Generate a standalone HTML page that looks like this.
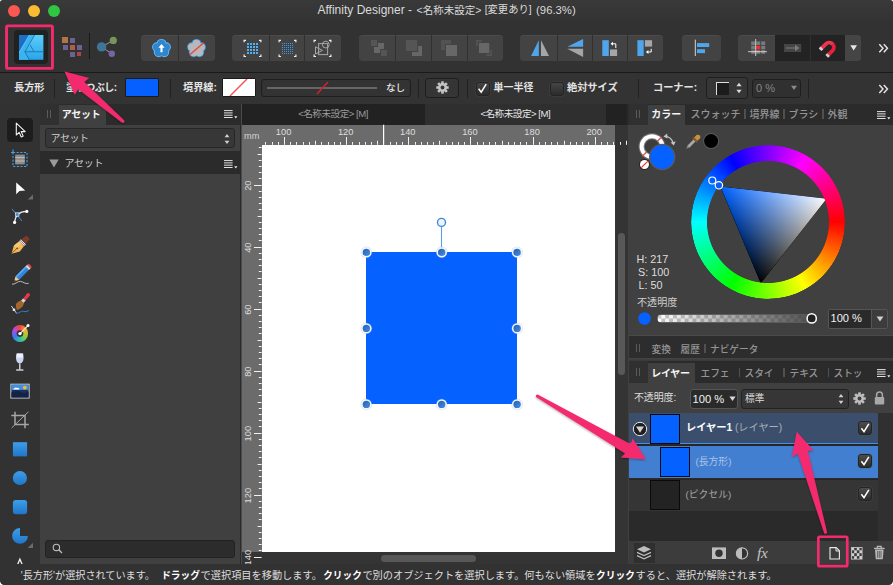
<!DOCTYPE html>
<html lang="ja"><head><meta charset="utf-8">
<title>Affinity Designer</title>
<style>
*{box-sizing:border-box;margin:0;padding:0}
html,body{width:893px;height:585px;overflow:hidden;background:#323232}
body{font-family:"Liberation Sans","Noto Sans CJK JP",sans-serif;font-size:12px;color:#dcdcdc;position:relative}
.a{position:absolute}
.t{position:absolute;white-space:nowrap;line-height:1}
.grp{position:absolute;top:35px;height:26px;background:#434343;box-shadow:inset 0 1px 0 #4b4b4b;border-radius:4px;overflow:hidden}
.grp i{position:absolute;top:0;bottom:0;width:1px;background:#303030}
.vs{position:absolute;top:78.5px;height:19.5px;width:1px;background:#212121;margin-left:-.5px}
.box{position:absolute;background:#363636;border:1px solid #1e1e1e;border-radius:3px}
.cb{position:absolute;width:14px;height:14px;border-radius:3px;background:linear-gradient(#454545,#2c2c2c);border:1px solid #242424;box-shadow:0 0 0 .5px rgba(90,90,90,.45)}
svg{position:absolute;overflow:visible}
.tg{font-size:10px;font-weight:500;color:#949494}
.ts{width:1.3px;height:9.4px;background:#505050;margin-left:-.6px}
.lc{background:linear-gradient(#4c4c4c,#2c2c2c);border-color:#242424;box-shadow:0 0 0 .5px rgba(90,90,90,.5)}
</style></head><body>

<!-- ===== title bar ===== -->
<div class="a" id="titlebar" style="left:0;top:0;width:893px;height:21px;background:linear-gradient(#393939,#333)"></div>
<div class="a" style="left:8px;top:5px;width:12px;height:12px;border-radius:50%;background:#fc5753"></div>
<div class="a" style="left:28px;top:5px;width:12px;height:12px;border-radius:50%;background:#fcbc31"></div>
<div class="a" style="left:48px;top:5px;width:12px;height:12px;border-radius:50%;background:#30c642"></div>
<div class="t" style="left:317.5px;top:4px;font-size:12px;color:#dadada">Affinity Designer -</div><div class="t" style="left:416.6px;top:5px;font-size:10.5px;color:#dadada">&lt;名称未設定&gt;</div><div class="t" style="left:484.7px;top:5px;font-size:10.3px;color:#dadada">[変更あり]</div><div class="t" style="left:536.1px;top:4.5px;font-size:11.3px;color:#dadada">(96.3%)</div>

<!-- ===== toolbar ===== -->
<div class="a" id="toolbar" style="left:0;top:21px;width:893px;height:51px;background:#323232"></div>
<!-- persona button -->
<div class="a" style="left:14px;top:30px;width:34px;height:34px;border-radius:4px;background:#212121"></div>
<svg style="left:19px;top:34.5px" width="24.4" height="24.8" viewBox="0 0 24 24" preserveAspectRatio="none">
 <defs><linearGradient id="afg" x1="0" y1="0" x2="0" y2="1"><stop offset="0" stop-color="#5ccdf9"/><stop offset="1" stop-color="#28a5ea"/></linearGradient></defs>
 <rect width="24" height="24" fill="url(#afg)"/>
 <path d="M0 0H10.2L0 17Z" fill="#1c6fc4"/>
 <path d="M10.2 0H15.4L5.6 16.2 10 24H5.4L0 24V17Z" fill="#39b4f0"/>
 <path d="M15.4 0L5.8 16.2 10.2 24M5.8 16.2H24M11 9.5L14.4 15.6M8 15.6" fill="none" stroke="#14629f" stroke-width=".7"/>
 <path d="M0 17L10.2 0" stroke="#7fdcff" stroke-width=".5" fill="none"/>
</svg>
<!-- pixel persona -->
<div class="a" style="left:62px;top:37px;width:6px;height:6px;background:#b47446"></div>
<div class="a" style="left:70px;top:38px;width:5px;height:5px;background:#6a6293"></div>
<div class="a" style="left:63px;top:45px;width:5px;height:5px;background:#6a6293"></div>
<div class="a" style="left:70px;top:45px;width:5px;height:5px;background:#b25f40"></div>
<div class="a" style="left:77px;top:45px;width:5px;height:5px;background:#6a6293"></div>
<div class="a" style="left:70px;top:52px;width:5px;height:5px;background:#6a6293"></div>
<div class="a" style="left:77px;top:52px;width:4px;height:4px;background:#ad4548"></div>
<div class="a" style="left:89px;top:33px;width:1px;height:26px;background:#191919"></div>
<!-- share -->
<svg style="left:95px;top:35px" width="24" height="24" viewBox="95 35 24 24">
 <path d="M113.3 40.4L101.6 46.9 111.8 53.8" fill="none" stroke="#9a9a9a" stroke-width="1"/>
 <circle cx="101.6" cy="46.9" r="4.7" fill="#3f7697"/><circle cx="113.3" cy="40.4" r="3.6" fill="#76955a"/><circle cx="111.8" cy="53.8" r="3.2" fill="#7764a2"/>
</svg>
<!-- group 1 -->
<div class="grp" style="left:141px;width:74px"><i style="left:37px"></i></div>
<svg style="left:149.6px;top:37.4px" width="23" height="23" viewBox="-11 -11 22 22">
 <g fill="#6cbaf6"><circle cx="0" cy="-4.6" r="4.6"/><circle cx="4.4" cy="-1.4" r="4.6"/><circle cx="2.7" cy="3.7" r="4.6"/><circle cx="-2.7" cy="3.7" r="4.6"/><circle cx="-4.4" cy="-1.4" r="4.6"/></g>
 <g fill="#2d86cf"><circle cx="0" cy="0" r="4"/><circle cx="0" cy="-4.6" r="3.7"/><circle cx="4.4" cy="-1.4" r="3.7"/><circle cx="2.7" cy="3.7" r="3.7"/><circle cx="-2.7" cy="3.7" r="3.7"/><circle cx="-4.4" cy="-1.4" r="3.7"/></g>
 <path d="M0 -4.2L3 -.6H1V3.6H-1V-.6H-3Z" fill="#fff"/>
</svg>
<svg style="left:184.8px;top:37.4px" width="23" height="23" viewBox="-11 -11 22 22">
 <g fill="#3c9aea"><circle cx="0" cy="-4.6" r="4.6"/><circle cx="4.4" cy="-1.4" r="4.6"/><circle cx="2.7" cy="3.7" r="4.6"/><circle cx="-2.7" cy="3.7" r="4.6"/><circle cx="-4.4" cy="-1.4" r="4.6"/></g>
 <g fill="#b8b8b8"><circle cx="0" cy="0" r="4"/><circle cx="0" cy="-4.6" r="3.7"/><circle cx="4.4" cy="-1.4" r="3.7"/><circle cx="2.7" cy="3.7" r="3.7"/><circle cx="-2.7" cy="3.7" r="3.7"/><circle cx="-4.4" cy="-1.4" r="3.7"/></g>
 <path d="M-6.5 6L7 -5.5" stroke="#f03a3a" stroke-width="1.1"/>
</svg>
<!-- group 2 -->
<div class="grp" style="left:232px;width:109px"><i style="left:37px"></i><i style="left:72px"></i></div>
<!-- group 3 -->
<div class="grp" style="left:359px;width:144px"><i style="left:36px"></i><i style="left:72px"></i><i style="left:108px"></i></div>
<!-- group 4 -->
<div class="grp" style="left:520px;width:143px"><i style="left:37px"></i><i style="left:72px"></i><i style="left:107px"></i></div>
<!-- group 5 -->
<div class="grp" style="left:682px;width:39px"></div>
<!-- group 6 -->
<div class="grp" style="left:738px;width:123px"><div class="a" style="left:37px;top:0;width:70px;height:26px;background:#232323"></div><i style="left:72px;background:#2f2f2f"></i><div class="a" style="left:107px;top:0;width:16px;height:26px;background:#454545"></div></div>
<!-- toolbar icons overlay -->
<svg style="left:0;top:0" width="893" height="72" viewBox="0 0 893 72">
 <!-- g2 icon1 -->
 <g fill="none" stroke="#f0f0f0" stroke-width="1.2">
  <path d="M244.1 42.2V40.3H246M259 40.3H260.9V42.2M260.9 54.6V56.5H259M246 56.5H244.1V54.6"/>
  <path d="M279.1 42.2V40.3H281M294 40.3H295.9V42.2M295.9 54.6V56.5H294M281 56.5H279.1V54.6"/>
  <path d="M314.1 42.2V40.3H316M329 40.3H330.9V42.2M330.9 54.6V56.5H329M316 56.5H314.1V54.6"/>
 </g>
 <g fill="#4fb0f5"><rect x="247" y="43" width="2" height="2"/><rect x="250" y="43" width="2" height="2"/><rect x="253" y="43" width="2" height="2"/><rect x="256" y="43" width="2" height="2"/><rect x="247" y="46" width="2" height="2"/><rect x="250" y="46" width="2" height="2"/><rect x="253" y="46" width="2" height="2"/><rect x="256" y="46" width="2" height="2"/><rect x="247" y="49" width="2" height="2"/><rect x="250" y="49" width="2" height="2"/><rect x="253" y="49" width="2" height="2"/><rect x="256" y="49" width="2" height="2"/><rect x="247" y="52" width="2" height="2"/><rect x="250" y="52" width="2" height="2"/><rect x="253" y="52" width="2" height="2"/><rect x="256" y="52" width="2" height="2"/></g>
 <g fill="#3f97e0"><rect x="282" y="43" width="1" height="1"/><rect x="284" y="43" width="1" height="1"/><rect x="286" y="43" width="1" height="1"/><rect x="288" y="43" width="1" height="1"/><rect x="290" y="43" width="1" height="1"/><rect x="292" y="43" width="1" height="1"/><rect x="282" y="45" width="1" height="1"/><rect x="284" y="45" width="1" height="1"/><rect x="286" y="45" width="1" height="1"/><rect x="288" y="45" width="1" height="1"/><rect x="290" y="45" width="1" height="1"/><rect x="292" y="45" width="1" height="1"/><rect x="282" y="47" width="1" height="1"/><rect x="284" y="47" width="1" height="1"/><rect x="286" y="47" width="1" height="1"/><rect x="288" y="47" width="1" height="1"/><rect x="290" y="47" width="1" height="1"/><rect x="292" y="47" width="1" height="1"/><rect x="282" y="49" width="1" height="1"/><rect x="284" y="49" width="1" height="1"/><rect x="286" y="49" width="1" height="1"/><rect x="288" y="49" width="1" height="1"/><rect x="290" y="49" width="1" height="1"/><rect x="292" y="49" width="1" height="1"/><rect x="282" y="51" width="1" height="1"/><rect x="284" y="51" width="1" height="1"/><rect x="286" y="51" width="1" height="1"/><rect x="288" y="51" width="1" height="1"/><rect x="290" y="51" width="1" height="1"/><rect x="292" y="51" width="1" height="1"/><rect x="282" y="53" width="1" height="1"/><rect x="284" y="53" width="1" height="1"/><rect x="286" y="53" width="1" height="1"/><rect x="288" y="53" width="1" height="1"/><rect x="290" y="53" width="1" height="1"/><rect x="292" y="53" width="1" height="1"/></g>
 <!-- g2 icon3 -->
 <g fill="none" stroke="#a8a8a8" stroke-width="1">
  <rect x="318.6" y="43.6" width="9" height="11"/><circle cx="325.8" cy="44.6" r="3.4"/><path d="M315.5 46.8L322.4 50.4 315.5 54Z"/>
 </g>
 <!-- g3 icons (disabled) -->
 <rect x="371" y="40" width="6" height="6" fill="#555"/><rect x="381" y="50" width="6" height="6" fill="#555"/><rect x="378" y="43" width="6" height="6" fill="#676767"/><rect x="374" y="47" width="6" height="6" fill="#676767"/>
 <rect x="412" y="46" width="10" height="10" fill="#676767"/><rect x="405" y="39" width="13.2" height="13" fill="#434343"/><rect x="406" y="40" width="11.2" height="11" fill="#555"/>
 <rect x="441" y="40" width="10" height="10" fill="#525252"/><rect x="445" y="44" width="13" height="13" fill="#434343"/><rect x="446" y="45" width="11" height="11" fill="#676767"/>
 <rect x="476" y="40" width="6" height="6" fill="#525252"/><rect x="486" y="50" width="6" height="6" fill="#525252"/><rect x="478" y="42" width="12.3" height="12" fill="#434343"/><rect x="479" y="43" width="10.3" height="10" fill="#676767"/>
 <!-- g4 icons -->
 <path d="M531.1 56L538.8 40.2V56Z" fill="#4fa6ec"/><path d="M541 40.2L549 56H541Z" fill="#a6a6a6"/>
 <path d="M567.3 46.7L583.1 39V46.7Z" fill="#4fa6ec"/><path d="M567.3 48.8H583.1V56.9Z" fill="#a6a6a6"/>
 <rect x="602.3" y="40.2" width="6.5" height="15.8" fill="#4fa6ec"/><rect x="610" y="49.4" width="7.1" height="6.6" fill="#a6a6a6"/>
 <path d="M615.8 48V43.8H612" fill="none" stroke="#fff" stroke-width="1"/><path d="M610.6 43.8L613 41.8V45.8Z" fill="#fff"/>
 <rect x="637.4" y="40.2" width="6.3" height="15.8" fill="#4fa6ec"/><rect x="644.9" y="40.2" width="7.2" height="6.4" fill="#a6a6a6"/>
 <path d="M651.2 48.8V52H647.6" fill="none" stroke="#fff" stroke-width="1"/><path d="M645.8 52L648.4 50V54Z" fill="#fff"/>
 <!-- g5 -->
 <path d="M695.3 39.7V56" stroke="#d8d8d8" stroke-width="1"/><rect x="697" y="43.1" width="12.2" height="3.9" fill="#4fa6ec"/><rect x="697" y="49.2" width="8" height="3.9" fill="#4fa6ec"/>
 <!-- g6 grid -->
 <g fill="#7a7a7a"><rect x="751.2" y="41.4" width="4" height="3.6"/><rect x="756.2" y="41.4" width="4" height="3.6"/><rect x="761.2" y="41.4" width="4" height="3.6"/>
 <rect x="751.2" y="45.8" width="4" height="3.6"/><rect x="761.2" y="45.8" width="4" height="3.6"/>
 <rect x="751.2" y="50.2" width="4" height="3.6"/><rect x="756.2" y="50.2" width="4" height="3.6"/><rect x="761.2" y="50.2" width="4" height="3.6"/></g>
 <rect x="756.2" y="45.8" width="4" height="3.6" fill="#f03030"/>
 <path d="M755.7 39V56M748 51.7H767" stroke="#e8e8e8" stroke-width=".8" fill="none"/>
 <!-- arrow icon -->
 <rect x="784" y="44" width="17.2" height="8" fill="#454545"/><path d="M786 48H797" stroke="#7c7c7c" stroke-width="1"/><path d="M795 44.8L799.4 48 795 51.2Z" fill="#7c7c7c"/>
 <!-- magnet -->
 <g transform="translate(828.5 48) rotate(45)">
  <path d="M-6.6 6.5V-1A6.6 6.6 0 0 1 6.6 -1V6.5H2.8V-1A2.8 2.8 0 0 0 -2.8 -1V6.5Z" fill="#e8203c"/>
  <path d="M-6.6 6.5V-1A6.6 6.6 0 0 1 0 -7.6V-3.8A2.8 2.8 0 0 0 -2.8 -1V6.5Z" fill="#f2455c" opacity=".6"/>
  <rect x="-6.6" y="4.6" width="3.8" height="2.6" fill="#d0d0d0"/><rect x="2.8" y="4.6" width="3.8" height="2.6" fill="#d0d0d0"/>
 </g>
 <path d="M850.3 45.2H857L853.65 50.6Z" fill="#e6e6e6"/>
 <path d="M879.3 44.2L883 48.2 879.3 52.2M883.8 44.2L887.5 48.2 883.8 52.2" fill="none" stroke="#e8e8e8" stroke-width="1.4"/>
</svg>
<div class="a" style="left:0;top:72px;width:893px;height:1px;background:#1a1a1a"></div>

<!-- ===== context bar ===== -->
<div class="a" id="ctx" style="left:0;top:73px;width:893px;height:31px;background:#333"></div>

<div class="t" style="left:14px;top:83.2px;font-size:10.2px;font-weight:700;color:#e4e4e4">長方形</div>
<div class="vs" style="left:54px"></div>
<div class="t" style="left:66px;top:83.2px;font-size:10px;font-weight:700;color:#e4e4e4;letter-spacing:-.45px">塗りつぶし:</div>
<div class="a" style="left:125px;top:78px;width:34px;height:19px;background:#0560ff;border:1px solid #1a1a1a;border-radius:1px"></div>
<div class="vs" style="left:170px"></div>
<div class="t" style="left:183px;top:83.2px;font-size:10.2px;font-weight:700;color:#e4e4e4">境界線:</div>
<div class="a" style="left:222px;top:78px;width:34px;height:19px;background:#fff;border:1px solid #1a1a1a;border-radius:1px;overflow:hidden"><svg style="left:0;top:0" width="32" height="17"><path d="M7 17L24 0" stroke="#f65050" stroke-width="1.4"/></svg></div>
<div class="box" style="left:261px;top:78.5px;width:150px;height:18.5px;background:#333"></div>
<div class="a" style="left:267px;top:87px;width:110px;height:1.5px;background:#666"></div>
<svg style="left:315px;top:80px" width="16" height="16"><path d="M2 14L13 2" stroke="#d8202c" stroke-width="1.4"/></svg>
<div class="t" style="left:386px;top:83px;font-size:9.6px;font-weight:500;color:#e4e4e4">なし</div>
<div class="vs" style="left:418px"></div>
<div class="box" style="left:425px;top:77.5px;width:34px;height:20.5px;background:#353535"></div>
<svg style="left:435.5px;top:81px" width="13" height="13" viewBox="-6.5 -6.5 13 13"><g fill="#c4c4c4"><circle r="4.4"/><rect x="-1.3" y="-6.2" width="2.6" height="12.4"/><rect x="-1.3" y="-6.2" width="2.6" height="12.4" transform="rotate(45)"/><rect x="-1.3" y="-6.2" width="2.6" height="12.4" transform="rotate(90)"/><rect x="-1.3" y="-6.2" width="2.6" height="12.4" transform="rotate(135)"/></g><circle r="1.9" fill="#353535"/></svg>
<div class="vs" style="left:467px"></div>
<div class="cb" style="left:475.5px;top:81.5px"></div>
<svg style="left:477px;top:83px" width="11" height="11"><path d="M1.6 5.8L4.2 9.2 9.2 1.2" fill="none" stroke="#fff" stroke-width="1.5"/></svg>
<div class="t" style="left:493.5px;top:83.2px;font-size:10px;font-weight:700;color:#e4e4e4">単一半径</div>
<div class="cb" style="left:549.5px;top:81.5px"></div>
<div class="t" style="left:567px;top:83.2px;font-size:10.2px;font-weight:700;color:#e4e4e4">絶対サイズ</div>
<div class="vs" style="left:638px"></div>
<div class="t" style="left:653px;top:83.2px;font-size:10.2px;font-weight:700;color:#e4e4e4">コーナー:</div>
<div class="box" style="left:705.5px;top:77px;width:42px;height:22px;background:#363636"></div>
<div class="a" style="left:716px;top:81.5px;width:13px;height:13px;background:#1c1c1c;border-left:1.5px solid #ddd;border-top:1.5px solid #ddd"></div>
<svg style="left:735px;top:82px" width="8" height="12"><path d="M4 .8L6.6 4.2H1.4ZM4 11.2L6.6 7.8H1.4Z" fill="#d8d8d8"/></svg>
<div class="box" style="left:752px;top:78.5px;width:49px;height:19.5px;background:#303030"></div>
<div class="t" style="left:756px;top:82.5px;font-size:11px;color:#858585">0 %</div>
<svg style="left:790px;top:85px" width="8" height="6"><path d="M1 .8H7L4 5Z" fill="#8a8a8a"/></svg>
<div class="vs" style="left:808px"></div>
<svg style="left:0;top:73px" width="893" height="31" viewBox="0 73 893 31"><path d="M879.3 85L883 89 879.3 93M883.8 85L887.5 89 883.8 93" fill="none" stroke="#e8e8e8" stroke-width="1.4"/></svg>
<!-- ===== left tools ===== -->
<div class="a" id="tools" style="left:0;top:104px;width:40px;height:461px;background:#323232"></div>

<!-- ===== assets panel ===== -->
<div class="a" id="assets" style="left:40px;top:104px;width:201px;height:460px;background:#404040"></div>

<!-- tools -->
<div class="a" style="left:7px;top:118px;width:26px;height:24px;border-radius:4px;background:#1d1d1d"></div>
<svg style="left:0;top:104px" width="40" height="460" viewBox="0 104 40 460">
 <defs>
  <linearGradient id="bl" x1="0" y1="0" x2="0" y2="1"><stop offset="0" stop-color="#3d9ee9"/><stop offset="1" stop-color="#1f76c9"/></linearGradient>
 </defs>
 <!-- move -->
 <path d="M16.3 123.2V135L19.2 132.4 21.2 137 23.2 136.1 21.2 131.6H25.2Z" fill="#1d1d1d" stroke="#f2f2f2" stroke-width="1.1" stroke-linejoin="round"/>
 <!-- artboard -->
 <rect x="13" y="152.5" width="14" height="14" fill="none" stroke="#3ea0f0" stroke-width="1.1" stroke-dasharray="2.2 1.4"/>
 <path d="M13 149.5V153M11 152.5H14.5" stroke="#3ea0f0" stroke-width="1.1"/>
 <rect x="15.2" y="154.6" width="9.6" height="9.8" fill="#8d8d8d"/><path d="M15.2 157.6H24.8M15.2 161H24.8" stroke="#c4c4c4" stroke-width=".9"/>
 <!-- node -->
 <path d="M16.2 182.6V194.2L19.4 191 25.2 190.6Z" fill="#fff"/>
 <path d="M33 194.4V199.6H27.6Z" fill="#6a6a6a"/>
 <!-- corner -->
 <path d="M12 209L22 221" stroke="#3b8fe0" stroke-width="1"/>
 <path d="M14.6 222.6C15.2 215 19.5 211.6 26.5 211.4" fill="none" stroke="#e8e8e8" stroke-width="1.1"/>
 <rect x="15.6" y="212.8" width="3.4" height="3.4" fill="#3b8fe0" stroke="#fff" stroke-width=".6"/>
 <circle cx="26.8" cy="211.4" r="1.6" fill="#fff"/><circle cx="14.6" cy="222.4" r="1.6" fill="#fff"/>
 <!-- pen -->
 <g transform="translate(19.8 245.5) rotate(45)">
  <path d="M-3.4 -2.6H3.4L4.2 4.2 0 11.6 -4.2 4.2Z" fill="#f3b85a"/><path d="M0 11.6V4.4" stroke="#7a4a12" stroke-width=".8"/><circle cx="0" cy="3.8" r="1.1" fill="#7a4a12"/>
  <path d="M-3.4 -2.6H0V4.2L-4.2 4.2Z" fill="#f9d48a" opacity=".55"/>
  <rect x="-3.6" y="-5.2" width="7.2" height="2.4" fill="#e8e8e8"/><path d="M-3.6 -4H3.6" stroke="#555" stroke-width=".6"/>
  <path d="M-3.2 -5.2L-2.4 -11.5Q0 -13 2.4 -11.5L3.2 -5.2Z" fill="#7b3a28"/>
 </g>
 <!-- pencil -->
 <g transform="translate(20.6 274.8) rotate(45)">
  <rect x="-2.5" y="-9.5" width="5" height="14" fill="#2f86dc"/><rect x="-2.5" y="-9.5" width="1.7" height="14" fill="#59a8f0"/>
  <rect x="-2.5" y="-11.8" width="5" height="2.4" fill="#d8d8d8"/><rect x="-2.5" y="-13.6" width="5" height="2" rx="1" fill="#e2484f"/>
  <path d="M-2.5 4.5H2.5L0 9.4Z" fill="#efc890"/><path d="M-.9 7.6H.9L0 9.6Z" fill="#333"/>
 </g>
 <path d="M12 284.2C15 284.8 17.5 281 20.5 281.4 23.5 281.8 25 284.2 28.6 283.4" fill="none" stroke="#c8c8c8" stroke-width=".9"/>
 <!-- brush -->
 <g transform="translate(21.4 303) rotate(40)">
  <path d="M-1.7 -11.5Q0 -13.4 1.7 -11.5L1.5 -4H-1.5Z" fill="#e43a48"/><rect x="-1.7" y="-4.6" width="3.4" height="3.2" fill="#d6d6d6"/>
  <path d="M-2.2 -1.4H2.2Q4.6 3.4 1 8.2Q-1.6 7.6 -3.6 4.2Q-3.8 .8 -2.2 -1.4Z" fill="#a4662c"/>
 </g>
 <path d="M11.4 306L16.6 313.4" stroke="#e8e8e8" stroke-width=".9"/><rect x="12.8" y="308.6" width="2.4" height="2.4" fill="#e8e8e8"/>
 <path d="M15.4 312.6C18.6 314.4 20.6 310.6 23.4 311.4 25.6 312 26.8 311.6 29 310.4" fill="none" stroke="#2f7fe0" stroke-width="1"/>
 
 <!-- glass -->
 <path d="M16.4 353.4H23.2Q24.8 362.4 19.8 363.6Q14.8 362.4 16.4 353.4Z" fill="#c9d6ee"/><path d="M17 353.4H22.6L23 357.4H16.6Z" fill="#eef2fb"/>
 <path d="M19.8 363.4V369.6" stroke="#dfe6f5" stroke-width="1.3"/><path d="M16.2 370H23.4" stroke="#dfe6f5" stroke-width="1.3"/>
 <!-- image -->
 <rect x="10.9" y="384.2" width="18.2" height="13.8" fill="#1d3057" stroke="#d8d8d8" stroke-width="1"/>
 <rect x="11.4" y="384.7" width="17.2" height="5.2" fill="#3f8fe4"/><circle cx="24.8" cy="387.6" r="1.9" fill="#f7b733"/>
 <path d="M13 389.6Q15 386.6 17.4 388 18.6 387.4 19.6 389.6Z" fill="#fff"/>
 <path d="M11.4 392.4Q17 389.4 22 392.4 25 393.8 28.6 391.6V397.5H11.4Z" fill="#132246"/>
 <!-- crop -->
 <path d="M15 411.8V424.6H28.8M11.3 415.4H25V428.2" fill="none" stroke="#a6a6a6" stroke-width="1.5"/><path d="M11.6 428L28.4 411.8" stroke="#a6a6a6" stroke-width="1"/>
 <!-- shapes -->
 <rect x="12.9" y="442.2" width="14.2" height="14.2" fill="url(#bl)"/>
 <circle cx="19.9" cy="478" r="7.1" fill="url(#bl)"/>
 <rect x="12.9" y="500" width="14.2" height="14.2" rx="3" fill="url(#bl)"/>
 <path d="M20 535.9V528A7.9 7.9 0 1 0 27.9 535.9Z" fill="url(#bl)"/>
 <path d="M33 542.8V548H27.6Z" fill="#6a6a6a"/>
 <path d="M17.6 564.6L19.9 559.2 22.2 564.6" fill="none" stroke="#f2f2f2" stroke-width="1.3"/>
</svg>
<div class="a" style="left:11.8px;top:325.4px;width:16.4px;height:16.4px;border-radius:50%;background:conic-gradient(from 0deg,#f2453d,#f7b32b,#8ccf3f,#2fbfa8,#3b78f0,#b34be0,#f2453d)"></div><svg style="left:10px;top:322px" width="22" height="22" viewBox="-10 -11.6 22 22"><circle r="3.3" fill="#323232"/><path d="M0 0L8 -8" stroke="#f2f2f2" stroke-width="1.1"/><circle r="1.7" fill="#fff"/><circle cx="8" cy="-8" r="1.5" fill="#fff"/></svg>
<!-- assets panel -->
<div class="a" style="left:40px;top:104px;width:201px;height:21px;background:#2b2b2b"></div>
<div class="a" style="left:40px;top:104px;width:18.5px;height:21px;background:#303030"></div><div class="a" style="left:58.5px;top:105px;width:47.7px;height:20px;background:#404040"></div>
<div class="a" style="left:47px;top:110px;width:1px;height:8px;background:#5a5a5a"></div><div class="a" style="left:50px;top:110px;width:1px;height:8px;background:#5a5a5a"></div>
<div class="t" style="left:61.8px;top:110.4px;font-size:10px;font-weight:700;color:#f4f4f4;letter-spacing:-.3px">アセット</div>
<svg class="menu" style="left:224px;top:110px" width="14" height="10"><path d="M0 .6H8.6M0 2.9H8.6M0 5.2H8.6M0 7.5H8.6" stroke="#ececec" stroke-width=".95"/><path d="M10.2 6.2H13.4L11.8 8.6Z" fill="#ececec"/></svg>
<div class="box" style="left:45px;top:128px;width:190px;height:19.5px;background:#373737;border-color:#262626"></div>
<div class="t" style="left:50.5px;top:134.4px;font-size:10px;color:#cfcfcf;letter-spacing:-.4px">アセット</div>
<svg style="left:223px;top:132.5px" width="8" height="12"><path d="M4 1L6.4 4.2H1.6ZM4 11L6.4 7.8H1.6Z" fill="#d0d0d0"/></svg>
<div class="a" style="left:40px;top:151px;width:201px;height:1px;background:#2a2a2a"></div>
<div class="a" style="left:40px;top:152px;width:201px;height:22px;background:#2b2b2b"></div>
<svg style="left:49px;top:158.5px" width="10" height="9"><path d="M.3 .4H9.7L5 8.6Z" fill="#9a9a9a"/></svg>
<div class="t" style="left:64.5px;top:159.2px;font-size:10px;color:#cfcfcf;letter-spacing:-.3px">アセット</div>
<svg class="menu" style="left:224px;top:160px" width="14" height="10"><path d="M0 .6H8.6M0 2.9H8.6M0 5.2H8.6M0 7.5H8.6" stroke="#ececec" stroke-width=".95"/><path d="M10.2 6.2H13.4L11.8 8.6Z" fill="#ececec"/></svg>
<div class="box" style="left:45px;top:539.5px;width:190px;height:18px;background:#2c2c2c;border-color:#222;border-radius:3px"></div>
<svg style="left:52px;top:543px" width="11" height="11"><circle cx="4.4" cy="4.4" r="3.2" fill="none" stroke="#bdbdbd" stroke-width="1.1"/><path d="M6.8 6.8L10 10" stroke="#bdbdbd" stroke-width="1.3"/></svg>
<div class="a" style="left:240px;top:104px;width:2px;height:460px;background:#2a2a2a"></div>
<!-- ===== canvas ===== -->
<div class="a" id="canvas" style="left:241px;top:104px;width:387px;height:460px;background:#4b4b4b"></div>

<!-- doc tabs -->
<div class="a" style="left:242px;top:104px;width:385px;height:21px;background:#222"></div>
<div class="a" style="left:424.5px;top:104px;width:181.5px;height:21px;background:#2f2f2f"></div>
<div class="t" style="left:242px;width:182px;text-align:center;top:109.3px;font-size:9.6px;color:#9a9a9a;letter-spacing:-.5px">&lt;名称未設定&gt; [M]</div>
<div class="t" style="left:424.5px;width:181.5px;text-align:center;top:109.3px;font-size:9.6px;color:#e6e6e6;letter-spacing:-.5px">&lt;名称未設定&gt; [M]</div>
<!-- rulers -->
<div class="a" style="left:242px;top:124.7px;width:373px;height:20.3px;background:#6b6b6b"></div>
<div class="a" style="left:242px;top:124.7px;width:19.6px;height:427.5px;background:#6b6b6b"></div>
<div class="a" style="left:615px;top:124.7px;width:14px;height:440px;background:#343434"></div>
<div class="a" style="left:242px;top:552px;width:385px;height:13px;background:#343434"></div>
<div class="a" style="left:261.6px;top:144.8px;width:353.4px;height:407.4px;background:#fff"></div>
<svg style="left:0;top:0" width="893" height="585"><path d="M265.5 144.8v-2.8M272.5 144.8v-2.8M278.5 144.8v-2.8M284.5 144.8v-7.8M290.5 144.8v-2.8M296.5 144.8v-2.8M303.5 144.8v-2.8M309.5 144.8v-2.8M315.5 144.8v-4M321.5 144.8v-2.8M328.5 144.8v-2.8M334.5 144.8v-2.8M340.5 144.8v-2.8M346.5 144.8v-7.8M352.5 144.8v-2.8M359.5 144.8v-2.8M365.5 144.8v-2.8M371.5 144.8v-2.8M377.5 144.8v-4M383.5 144.8v-2.8M390.5 144.8v-2.8M396.5 144.8v-2.8M402.5 144.8v-2.8M408.5 144.8v-7.8M415.5 144.8v-2.8M421.5 144.8v-2.8M427.5 144.8v-2.8M433.5 144.8v-2.8M439.5 144.8v-4M446.5 144.8v-2.8M452.5 144.8v-2.8M458.5 144.8v-2.8M464.5 144.8v-2.8M470.5 144.8v-7.8M477.5 144.8v-2.8M483.5 144.8v-2.8M489.5 144.8v-2.8M495.5 144.8v-2.8M502.5 144.8v-4M508.5 144.8v-2.8M514.5 144.8v-2.8M520.5 144.8v-2.8M526.5 144.8v-2.8M533.5 144.8v-7.8M539.5 144.8v-2.8M545.5 144.8v-2.8M551.5 144.8v-2.8M557.5 144.8v-2.8M564.5 144.8v-4M570.5 144.8v-2.8M576.5 144.8v-2.8M582.5 144.8v-2.8M588.5 144.8v-2.8M595.5 144.8v-7.8M601.5 144.8v-2.8M607.5 144.8v-2.8M613.5 144.8v-2.8M620.5 144.8v-2.8M626.5 144.8v-4M261.6 147.5h-2.8M261.6 154.5h-4M261.6 160.5h-2.8M261.6 166.5h-2.8M261.6 172.5h-2.8M261.6 178.5h-2.8M261.6 185.5h-7.6M261.6 191.5h-2.8M261.6 197.5h-2.8M261.6 203.5h-2.8M261.6 209.5h-2.8M261.6 216.5h-4M261.6 222.5h-2.8M261.6 228.5h-2.8M261.6 234.5h-2.8M261.6 240.5h-2.8M261.6 247.5h-7.6M261.6 253.5h-2.8M261.6 259.5h-2.8M261.6 265.5h-2.8M261.6 271.5h-2.8M261.6 278.5h-4M261.6 284.5h-2.8M261.6 290.5h-2.8M261.6 296.5h-2.8M261.6 302.5h-2.8M261.6 309.5h-7.6M261.6 315.5h-2.8M261.6 321.5h-2.8M261.6 327.5h-2.8M261.6 333.5h-2.8M261.6 340.5h-4M261.6 346.5h-2.8M261.6 352.5h-2.8M261.6 358.5h-2.8M261.6 364.5h-2.8M261.6 371.5h-7.6M261.6 377.5h-2.8M261.6 383.5h-2.8M261.6 389.5h-2.8M261.6 395.5h-2.8M261.6 402.5h-4M261.6 408.5h-2.8M261.6 414.5h-2.8M261.6 420.5h-2.8M261.6 426.5h-2.8M261.6 433.5h-7.6M261.6 439.5h-2.8M261.6 445.5h-2.8M261.6 451.5h-2.8M261.6 457.5h-2.8M261.6 464.5h-4M261.6 470.5h-2.8M261.6 476.5h-2.8M261.6 482.5h-2.8M261.6 488.5h-2.8M261.6 495.5h-7.6M261.6 501.5h-2.8M261.6 507.5h-2.8M261.6 513.5h-2.8M261.6 519.5h-2.8M261.6 526.5h-4M261.6 532.5h-2.8M261.6 538.5h-2.8M261.6 544.5h-2.8M261.6 550.5h-2.8M261.6 557.5h-7.6" stroke="#f2f2f2" stroke-width="1" fill="none"/><path d="M383.6 124.7V144.8" stroke="#fff" stroke-width="1.2"/></svg>
<div class="t" style="left:244px;top:131.5px;font-size:9.2px;color:#d2d2d2">mm</div>
<div class="t" style="left:263.6px;width:40px;text-align:center;top:127.5px;font-size:9.3px;color:#dedede">100</div>
<div class="t" style="left:325.7px;width:40px;text-align:center;top:127.5px;font-size:9.3px;color:#dedede">120</div>
<div class="t" style="left:387.8px;width:40px;text-align:center;top:127.5px;font-size:9.3px;color:#dedede">140</div>
<div class="t" style="left:449.9px;width:40px;text-align:center;top:127.5px;font-size:9.3px;color:#dedede">160</div>
<div class="t" style="left:512.1px;width:40px;text-align:center;top:127.5px;font-size:9.3px;color:#dedede">180</div>
<div class="t" style="left:574.2px;width:40px;text-align:center;top:127.5px;font-size:9.3px;color:#dedede">200</div>
<div class="t" style="left:229.3px;width:40px;text-align:center;top:180.7px;font-size:9.3px;color:#dedede;transform:rotate(-90deg)">20</div>
<div class="t" style="left:229.3px;width:40px;text-align:center;top:242.7px;font-size:9.3px;color:#dedede;transform:rotate(-90deg)">40</div>
<div class="t" style="left:229.3px;width:40px;text-align:center;top:304.7px;font-size:9.3px;color:#dedede;transform:rotate(-90deg)">60</div>
<div class="t" style="left:229.3px;width:40px;text-align:center;top:366.7px;font-size:9.3px;color:#dedede;transform:rotate(-90deg)">80</div>
<div class="t" style="left:229.3px;width:40px;text-align:center;top:428.7px;font-size:9.3px;color:#dedede;transform:rotate(-90deg)">100</div>
<div class="t" style="left:229.3px;width:40px;text-align:center;top:490.7px;font-size:9.3px;color:#dedede;transform:rotate(-90deg)">120</div>
<div class="t" style="left:229.3px;width:40px;text-align:center;top:552.7px;font-size:9.3px;color:#dedede;transform:rotate(-90deg)">140</div>
<div class="a" style="left:617.8px;top:233px;width:7.2px;height:142px;border-radius:3.6px;background:#585858"></div>
<div class="a" style="left:381px;top:555px;width:94.6px;height:7.4px;border-radius:3.7px;background:#585858"></div>
<!-- shape -->
<div class="a" style="left:366.4px;top:252.4px;width:150.7px;height:152px;background:#0561ff"></div>
<svg style="left:0;top:0" width="893" height="585"><defs><linearGradient id="hg" x1="0" y1="0" x2="1" y2="1"><stop offset="0" stop-color="#2360b8"/><stop offset="1" stop-color="#4a8ddb"/></linearGradient></defs><path d="M441.5 227V252" stroke="#5b9ee8" stroke-width="1.1"/><circle cx="441.5" cy="222.4" r="4" fill="#eef4fd" stroke="#3f88e0" stroke-width="1.4"/><g transform="translate(366.4 252.4)"><circle r="5.9" fill="#8aa4c8" opacity=".28"/><circle r="5.2" fill="#f4f7fc"/><circle r="3.7" fill="url(#hg)"/></g><g transform="translate(441.7 252.4)"><circle r="5.9" fill="#8aa4c8" opacity=".28"/><circle r="5.2" fill="#f4f7fc"/><circle r="3.7" fill="url(#hg)"/></g><g transform="translate(517.1 252.4)"><circle r="5.9" fill="#8aa4c8" opacity=".28"/><circle r="5.2" fill="#f4f7fc"/><circle r="3.7" fill="url(#hg)"/></g><g transform="translate(366.4 328.4)"><circle r="5.9" fill="#8aa4c8" opacity=".28"/><circle r="5.2" fill="#f4f7fc"/><circle r="3.7" fill="url(#hg)"/></g><g transform="translate(517.1 328.4)"><circle r="5.9" fill="#8aa4c8" opacity=".28"/><circle r="5.2" fill="#f4f7fc"/><circle r="3.7" fill="url(#hg)"/></g><g transform="translate(366.4 404.4)"><circle r="5.9" fill="#8aa4c8" opacity=".28"/><circle r="5.2" fill="#f4f7fc"/><circle r="3.7" fill="url(#hg)"/></g><g transform="translate(441.7 404.4)"><circle r="5.9" fill="#8aa4c8" opacity=".28"/><circle r="5.2" fill="#f4f7fc"/><circle r="3.7" fill="url(#hg)"/></g><g transform="translate(517.1 404.4)"><circle r="5.9" fill="#8aa4c8" opacity=".28"/><circle r="5.2" fill="#f4f7fc"/><circle r="3.7" fill="url(#hg)"/></g></svg>
<!-- ===== right panels ===== -->
<div class="a" id="right" style="left:628px;top:104px;width:265px;height:460px;background:#404040"></div>

<div class="a" style="left:627px;top:104px;width:2px;height:21px;background:#2a2a2a"></div>
<!-- colour tab bar -->
<div class="a" style="left:629px;top:104px;width:264px;height:21px;background:#2b2b2b"></div>
<div class="a" style="left:629px;top:104px;width:19px;height:21px;background:#303030"></div><div class="a" style="left:648px;top:105px;width:37.1px;height:20px;background:#404040"></div>
<div class="a" style="left:636px;top:110px;width:1px;height:8px;background:#5a5a5a"></div><div class="a" style="left:639px;top:110px;width:1px;height:8px;background:#5a5a5a"></div>
<div class="t" style="left:651.3px;top:110px;font-size:10px;font-weight:700;color:#f4f4f4">カラー</div>
<div class="t tg" style="left:690.5px;top:110px">スウォッチ</div>
<div class="t tg" style="left:749.5px;top:110px">境界線</div>
<div class="t tg" style="left:788.5px;top:110px">ブラシ</div>
<div class="t tg" style="left:827.5px;top:110px">外観</div>
<div class="a ts" style="left:745px;top:109.4px"></div><div class="a ts" style="left:784px;top:109.4px"></div><div class="a ts" style="left:823px;top:109.4px"></div>
<svg style="left:876.5px;top:110.5px" width="14" height="10"><path d="M0 .6H8.6M0 2.9H8.6M0 5.2H8.6M0 7.5H8.6" stroke="#ececec" stroke-width=".95"/><path d="M10.2 6.2H13.4L11.8 8.6Z" fill="#ececec"/></svg>
<!-- selector -->
<svg style="left:629px;top:125px" width="264" height="210" viewBox="629 125 264 210">
 <defs>
  <linearGradient id="tr" gradientUnits="userSpaceOnUse" x1="760.8" y1="283.0" x2="846.8" y2="247.0"><stop offset="0" stop-color="#000"/><stop offset="1" stop-color="#f00"/></linearGradient>
  <linearGradient id="tg" gradientUnits="userSpaceOnUse" x1="760.8" y1="283.0" x2="835.0" y2="206.9"><stop offset="0" stop-color="#000"/><stop offset="1" stop-color="#0f0"/></linearGradient>
  <linearGradient id="tb" gradientUnits="userSpaceOnUse" x1="760.8" y1="283.0" x2="771.2" y2="192.3"><stop offset="0" stop-color="#000"/><stop offset="1" stop-color="#00f"/></linearGradient>
  <pattern id="chk" x="657.4" y="314.6" width="7.8" height="7.8" patternUnits="userSpaceOnUse"><rect width="7.8" height="7.8" fill="#fff"/><rect width="3.9" height="3.9" fill="#c8c8c8"/><rect x="3.9" y="3.9" width="3.9" height="3.9" fill="#c8c8c8"/></pattern>
  <linearGradient id="fade" x1="0" y1="0" x2="1" y2="0"><stop offset="0" stop-color="#404040" stop-opacity="0"/><stop offset="1" stop-color="#404040" stop-opacity=".95"/></linearGradient>
  <clipPath id="slc"><rect x="657.4" y="314.6" width="159.6" height="7.8" rx="3.9"/></clipPath>
 </defs>
 <!-- stroke ring -->
 <circle cx="652" cy="146.6" r="13.5" fill="#686868"/>
 <circle cx="652" cy="146.6" r="12.4" fill="#fff"/>
 <path d="M642.6 156L661.4 137.2" stroke="#f04848" stroke-width="1.4"/>
 <circle cx="652" cy="146.6" r="8.4" fill="#7a7a7a"/><circle cx="652" cy="146.6" r="7.3" fill="#3d3d3d"/>
 <!-- fill -->
 <circle cx="662.2" cy="157" r="13.2" fill="#5a5a5a"/><circle cx="662.2" cy="157" r="11.9" fill="#0561ff"/>
 <!-- swap arrows -->
 <path d="M665.6 136.4Q671.4 137 673.2 143.2" fill="none" stroke="#c6c6c6" stroke-width="1.3"/><path d="M663.4 136.4L667.2 133.6 667.4 138.6ZM673.8 145.6L670.6 142.4 675.6 141.6Z" fill="#c6c6c6"/>
 <!-- none -->
 <circle cx="644.5" cy="164.5" r="5.4" fill="#222"/><circle cx="644.5" cy="164.5" r="4.5" fill="#fff"/><path d="M641.3 167.7L647.7 161.3" stroke="#f03030" stroke-width="1.2"/>
 <!-- eyedropper -->
 <g transform="translate(694 141) rotate(45)"><rect x="-1.4" y="-1" width="2.8" height="9" fill="#a8a8a8"/><path d="M-1.4 8H1.4L0 11Z" fill="#888"/><rect x="-3" y="-2.6" width="6" height="2" fill="#8a5a20"/><path d="M-2.4 -2.6V-6.5Q0 -9.6 2.4 -6.5V-2.6Z" fill="#c8923c"/></g>
 <circle cx="711.1" cy="141.1" r="8" fill="#5a5a5a"/><circle cx="711.1" cy="141.1" r="7" fill="#000"/>
 <!-- triangle -->
 <g style="isolation:isolate"><path d="M720.4 186.5L826.6 198.7 760.8 283Z" fill="#000"/><path d="M720.4 186.5L826.6 198.7 760.8 283Z" fill="url(#tr)" style="mix-blend-mode:screen"/><path d="M720.4 186.5L826.6 198.7 760.8 283Z" fill="url(#tg)" style="mix-blend-mode:screen"/><path d="M720.4 186.5L826.6 198.7 760.8 283Z" fill="url(#tb)" style="mix-blend-mode:screen"/></g>
 <!-- opacity -->
 <circle cx="644.5" cy="318.5" r="6.3" fill="#0561ff"/>
 <g clip-path="url(#slc)"><rect x="657.4" y="314.6" width="159.6" height="7.8" fill="url(#chk)"/><rect x="657.4" y="314.6" width="159.6" height="7.8" fill="url(#fade)"/></g>
 <circle cx="811.7" cy="318.4" r="4.6" fill="#222" stroke="#fff" stroke-width="1.5"/>
</svg>
<div class="a" style="left:691.4px;top:145.2px;width:154px;height:154px;border-radius:50%;background:conic-gradient(from 90deg,#f00,#ff0,#0f0,#0ff,#00f,#f0f,#f00);-webkit-mask:radial-gradient(circle closest-side,transparent 60.6px,#000 61.4px,#000 76.4px,transparent 77.2px);mask:radial-gradient(circle closest-side,transparent 60.6px,#000 61.4px,#000 76.4px,transparent 77.2px)"></div>
<svg style="left:700px;top:170px" width="30" height="25" viewBox="700 170 30 25"><circle cx="712.3" cy="180.5" r="3.5" fill="none" stroke="#fff" stroke-width="1.2"/><circle cx="718.9" cy="185.3" r="3.7" fill="#0a60f0" stroke="#fff" stroke-width="1.2"/></svg>
<div class="t" style="left:636.5px;top:253.5px;font-size:10.8px;color:#dedede">H: 217</div>
<div class="t" style="left:638px;top:266.5px;font-size:10.8px;color:#dedede">S: 100</div>
<div class="t" style="left:638.5px;top:279.5px;font-size:10.8px;color:#dedede">L: 50</div>
<div class="t" style="left:637px;top:297.8px;font-size:10.1px;color:#cfcfcf">不透明度</div>
<div class="a" style="left:827.5px;top:308.5px;width:60px;height:20px;border:1px solid #555;border-radius:2px;background:#2a2a2a"></div>
<div class="a" style="left:871px;top:309.5px;width:15.5px;height:18px;background:#3c3c3c;border-left:1px solid #555"></div>
<div class="t" style="left:830.5px;top:313px;font-size:11.1px;color:#f2f2f2">100 %</div>
<svg style="left:875.5px;top:316px" width="8" height="6"><path d="M.6 .4H7.4L4 5.6Z" fill="#d0d0d0"/></svg>
<!-- second / third tab bars -->
<div class="a" style="left:629px;top:335px;width:264px;height:1.4px;background:#4a4a4a"></div>
<div class="a" style="left:629px;top:336.4px;width:264px;height:21.8px;background:#2d2d2d"></div>
<div class="a" style="left:629px;top:358.2px;width:264px;height:2.8px;background:linear-gradient(#454545,#383838)"></div>
<div class="a" style="left:629px;top:361px;width:264px;height:22px;background:#2b2b2b"></div><div class="a" style="left:629px;top:361px;width:19px;height:22px;background:#303030"></div>
<div class="a" style="left:636px;top:344px;width:1px;height:8px;background:#5a5a5a"></div><div class="a" style="left:639px;top:344px;width:1px;height:8px;background:#5a5a5a"></div>
<div class="a" style="left:636px;top:368px;width:1px;height:8px;background:#5a5a5a"></div><div class="a" style="left:639px;top:368px;width:1px;height:8px;background:#5a5a5a"></div>
<div class="t tg" style="left:651.5px;top:344.9px;font-size:9.7px">変換</div>
<div class="t tg" style="left:680.5px;top:344.9px;font-size:9.7px">履歴</div>
<div class="t tg" style="left:710px;top:344.9px;font-size:9.7px">ナビゲータ</div>
<div class="a ts" style="left:705px;top:343.6px"></div>
<div class="a" style="left:647.9px;top:363px;width:47.2px;height:20px;background:#404040"></div>
<div class="t" style="left:651.2px;top:369px;font-size:10px;font-weight:700;color:#f4f4f4;letter-spacing:-.3px">レイヤー</div>
<div class="t tg" style="left:700.5px;top:369px;font-size:9.7px">エフェ</div>
<div class="t tg" style="left:744.5px;top:369px;font-size:9.7px">スタイ</div>
<div class="t tg" style="left:789.5px;top:369px;font-size:9.7px">テキス</div>
<div class="t tg" style="left:833.5px;top:369px;font-size:9.7px">ストッ</div>
<div class="a ts" style="left:739.5px;top:367.6px"></div><div class="a ts" style="left:784px;top:367.6px"></div><div class="a ts" style="left:828.5px;top:367.6px"></div>
<svg style="left:876.5px;top:368.5px" width="14" height="10"><path d="M0 .6H8.6M0 2.9H8.6M0 5.2H8.6M0 7.5H8.6" stroke="#ececec" stroke-width=".95"/><path d="M10.2 6.2H13.4L11.8 8.6Z" fill="#ececec"/></svg>
<!-- opacity row -->
<div class="t" style="left:634px;top:393px;font-size:10px;color:#dedede;letter-spacing:-.15px">不透明度:</div>
<div class="a" style="left:689.5px;top:388.5px;width:48px;height:20px;border:1px solid #555;border-radius:3px;background:#2a2a2a"></div>
<div class="t" style="left:692.5px;top:393.8px;font-size:11.2px;color:#f2f2f2">100 %</div>
<svg style="left:728.5px;top:395.5px" width="7" height="6"><path d="M.4 .4H6.6L3.5 5Z" fill="#d8d8d8"/></svg>
<div class="box" style="left:740.5px;top:388.5px;width:108px;height:20px;background:#363636;border-color:#222"></div>
<div class="t" style="left:745px;top:393.5px;font-size:9.8px;color:#dcdcdc">標準</div>
<svg style="left:836.5px;top:392.5px" width="8" height="12"><path d="M4 1L6.4 4.2H1.6ZM4 11L6.4 7.8H1.6Z" fill="#d0d0d0"/></svg>
<svg style="left:852.5px;top:391.5px" width="13" height="13" viewBox="-6.5 -6.5 13 13"><g fill="#bdbdbd"><circle r="4.4"/><rect x="-1.3" y="-6.2" width="2.6" height="12.4"/><rect x="-1.3" y="-6.2" width="2.6" height="12.4" transform="rotate(45)"/><rect x="-1.3" y="-6.2" width="2.6" height="12.4" transform="rotate(90)"/><rect x="-1.3" y="-6.2" width="2.6" height="12.4" transform="rotate(135)"/></g><circle r="1.9" fill="#404040"/></svg>
<svg style="left:874px;top:391px" width="11" height="14"><path d="M2.6 6V4A2.9 2.9 0 0 1 8.4 4V6" fill="none" stroke="#a8a8a8" stroke-width="1.5"/><rect x=".8" y="6" width="9.4" height="7.4" rx="1" fill="#a8a8a8"/></svg>
<!-- layers list -->
<div class="a" style="left:629px;top:413px;width:264px;height:128.5px;background:#2a2a2a"></div>
<div class="a" style="left:878px;top:413px;width:15px;height:128.5px;background:#303030"></div>
<div class="a" style="left:629px;top:413.4px;width:249px;height:30px;background:#3b4e6c"></div>
<div class="a" style="left:629px;top:443px;width:249px;height:1.3px;background:#3f8ff2"></div><div class="a" style="left:629px;top:444.3px;width:249px;height:1.4px;background:#262626"></div>
<div class="a" style="left:629px;top:445.7px;width:249px;height:32.8px;background:#427fd0"></div>
<div class="a" style="left:629px;top:478.5px;width:249px;height:1px;background:#262626"></div><div class="a" style="left:629px;top:479.5px;width:249px;height:31.2px;background:#353535"></div>
<div class="a" style="left:650px;top:413.6px;width:30px;height:30px;background:#0561ff;border:1px solid #0a0a0a"></div>
<div class="a" style="left:660px;top:447px;width:30px;height:30px;background:#0561ff;border:1px solid #0a0a0a"></div>
<div class="a" style="left:650px;top:480px;width:30px;height:29.6px;background:#232323;border:1px solid #0a0a0a"></div>
<svg style="left:632px;top:421px" width="16" height="16"><circle cx="8" cy="8" r="6.7" fill="#1e1e1e" stroke="#e6e6e6" stroke-width="1"/><path d="M4 5.4H12L8 11.8Z" fill="#d2d2d2"/></svg>
<div class="t" style="left:686px;top:423.4px;font-size:10.2px;color:#a9afb8"><b style="color:#fff">レイヤー1</b> (レイヤー)</div>
<div class="t" style="left:695.5px;top:456.8px;font-size:9.8px;color:#a9c2e8">(長方形)</div>
<div class="t" style="left:685.5px;top:489.8px;font-size:9.8px;color:#a6a6a6">(ピクセル)</div>
<div class="cb lc" style="left:857.5px;top:421.3px"></div><div class="cb lc" style="left:857.5px;top:454.3px"></div><div class="cb lc" style="left:857.5px;top:487.3px"></div>
<svg style="left:857.5px;top:421.3px" width="14" height="80"><path d="M3.4 7.2L6 10.6 10.8 2.8M3.4 40.2L6 43.6 10.8 35.8M3.4 73.2L6 76.6 10.8 68.8" fill="none" stroke="#fff" stroke-width="1.5"/></svg>
<!-- bottom bar -->
<div class="a" style="left:629px;top:541px;width:264px;height:23.5px;background:#3c3c3c"></div>
<div class="a" style="left:633.5px;top:543px;width:21px;height:19.5px;background:#2f2f2f"></div>
<svg style="left:629px;top:541px" width="264" height="24" viewBox="629 541 264 24">
 <g fill="none" stroke="#bcbcbc" stroke-width="1.2"><path d="M637 552.4L644 555.6 651 552.4M637 555.6L644 558.8 651 555.6"/></g><path d="M637 549.2L644 546 651 549.2 644 552.4Z" fill="#bcbcbc"/>
 <rect x="712" y="547.4" width="14" height="11.6" fill="#bdbdbd"/><circle cx="719" cy="553.2" r="3.7" fill="#333"/>
 <circle cx="742" cy="553.4" r="5.6" fill="#333" stroke="#bdbdbd" stroke-width="1.2"/><path d="M742 547.8A5.6 5.6 0 0 0 742 559Z" fill="#bdbdbd"/>
 <path d="M830 547.6H836.2L839.4 550.8V559H830Z" fill="none" stroke="#e8e8e8" stroke-width="1.1"/><path d="M836 547.8V551H839.2" fill="none" stroke="#e8e8e8" stroke-width="1"/>
 <defs><pattern id="pg" x="851.6" y="547.4" width="5.2" height="5.8" patternUnits="userSpaceOnUse"><rect width="2.6" height="2.9" fill="#d0d0d0"/><rect x="2.6" y="2.9" width="2.6" height="2.9" fill="#d0d0d0"/></pattern></defs>
 <rect x="851.6" y="547.4" width="10.5" height="11.7" fill="#3c3c3c" stroke="#c8c8c8" stroke-width=".8"/><rect x="851.6" y="547.4" width="10.5" height="11.7" fill="url(#pg)"/>
 <path d="M874 548.4H884.6M877.4 548.2V546.4H881.2V548.2" fill="none" stroke="#b8b8b8" stroke-width="1.2"/><path d="M875 549.6H883.6L882.8 559.2H875.8Z" fill="#b8b8b8"/><path d="M877.6 551V557.8M879.3 551V557.8M881 551V557.8" stroke="#3c3c3c" stroke-width=".7"/>
</svg>
<div class="t" style="left:757px;top:544.5px;font-size:15.5px;font-style:italic;font-family:'Liberation Serif',serif;color:#c4c4c4;letter-spacing:-.3px">fx</div>
<!-- ===== status bar ===== -->
<div class="a" id="status" style="left:0;top:564px;width:893px;height:21px;background:#323232"></div>

<div id="stt"><span class="t" style="left:20.8px;top:571px;font-size:10.15px;font-weight:400;color:#dedede">'長方形'が選択されています。</span><span class="t" style="left:161.2px;top:571.2px;font-size:9.68px;font-weight:700;color:#fff">ドラッグ</span><span class="t" style="left:200.6px;top:571px;font-size:10.2px;font-weight:400;color:#dedede">で選択項目を移動します。</span><span class="t" style="left:323.2px;top:571.2px;font-size:9.68px;font-weight:700;color:#fff">クリック</span><span class="t" style="left:362.4px;top:571px;font-size:10.2px;font-weight:400;color:#dedede">で別のオブジェクトを選択します。何もない領域を</span><span class="t" style="left:596.1px;top:571.2px;font-size:9.72px;font-weight:700;color:#fff">クリック</span><span class="t" style="left:635.6px;top:571px;font-size:10.2px;font-weight:400;color:#dedede">すると、選択が解除されます。</span></div>
<!-- ===== annotations ===== -->
<svg id="anno" style="left:0;top:0" width="893" height="585">
 <defs><filter id="sh" x="-20%" y="-20%" width="140%" height="140%"><feDropShadow dx="0" dy="1" stdDeviation="1" flood-color="#000" flood-opacity=".35"/></filter></defs>
 <g fill="#f32b6d" filter="url(#sh)">
  <path d="M64.6 71.4L89.1 77.9 84.3 82.1 124.3 120.4Q125 123 122.2 122.8L78.3 89.3 74.7 94.7Z"/>
  <path d="M645.9 459.3L620.8 457.6 625.2 453.4 536 397Q535.4 394.4 537.6 394.4L630.4 444 632.8 438.6Z"/>
  <path d="M796.7 431.8L813.6 450.4 807.7 450.4 827.1 532.4Q826 534.6 824.2 533.2L797.9 453.7 792 456.8Z"/>
 </g>
 <rect x="6.55" y="25.85" width="45.9" height="42.5" rx="1.2" fill="none" stroke="#f32b6d" stroke-width="2.9"/>
 <rect x="818.35" y="536.75" width="28.9" height="29.4" rx="1.2" fill="none" stroke="#f32b6d" stroke-width="2.7"/>
 <path d="M0 585V579.6A5.4 5.4 0 0 0 5.4 585ZM893 585V579.6A5.4 5.4 0 0 1 887.6 585Z" fill="#1a1a1a"/><path d="M0 585V580.6A4.4 4.4 0 0 0 4.4 585ZM893 585V580.6A4.4 4.4 0 0 1 888.6 585ZM0 0H2.6A2.6 2.6 0 0 0 0 2.6ZM893 0H890.4A2.6 2.6 0 0 1 893 2.6Z" fill="#fff"/>
</svg>
</body></html>
